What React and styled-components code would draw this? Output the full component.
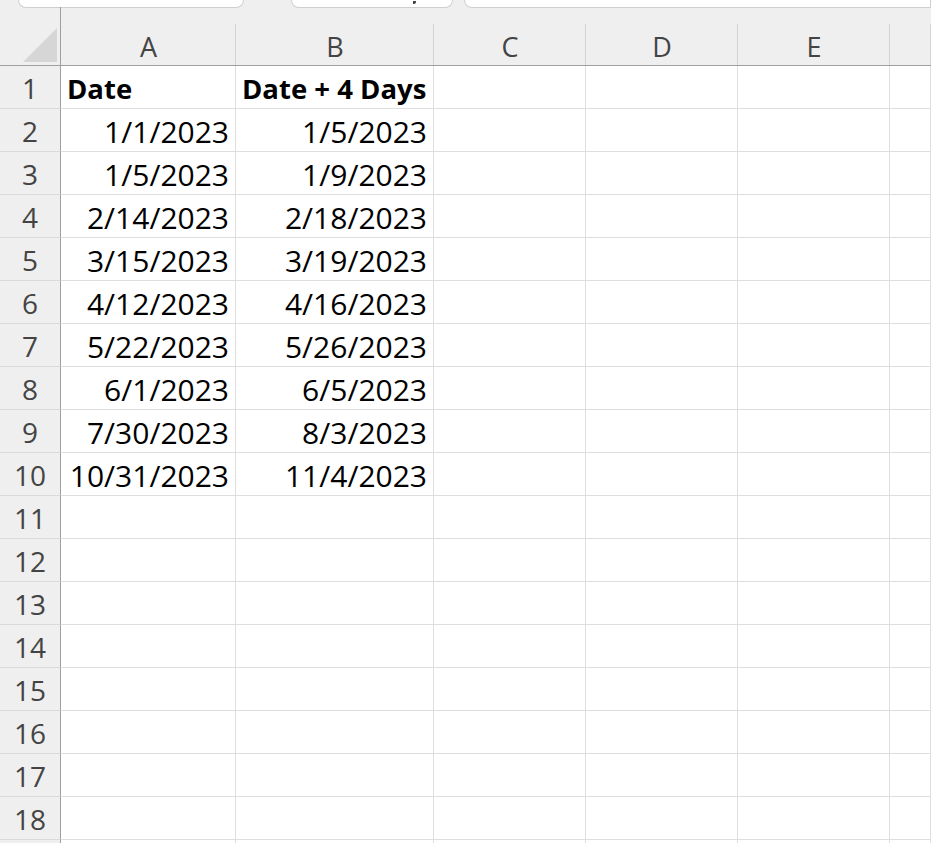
import React from 'react'
import styled, {createGlobalStyle} from 'styled-components'

const GlobalStyle = createGlobalStyle`
  html, body {
    margin: 0;
    padding: 0;
    background: #efefef;
    overflow: hidden;
  }
`

const Page = styled.div`
  width: 931px;
  height: 843px;
  overflow: hidden;
  background: #efefef;
`

const TopStrip = styled.div`
  display: flex;
  height: 7px;
  padding-left: 18px;
`

const TopBox = styled.div`
  box-sizing: border-box;
  height: 8px;
  width: ${p => p.$w};
  margin-right: ${p => p.$gap || '0px'};
  flex: ${p => p.$grow ? '1' : 'none'};
  background: #fff;
  border: 1px solid #cfcfcf;
  border-top: none;
  border-radius: ${p => p.$grow ? '0 0 0 8px' : '0 0 8px 8px'};
  display: flex;
  justify-content: flex-end;
  padding-right: 36px;
  overflow: hidden;
`

const Descender = styled.span`
  display: block;
  width: 3px;
  height: 3px;
  margin-top: 1px;
  background: #444;
  border-radius: 0 0 2px 0;
`

const Grid = styled.div`
  display: grid;
  grid-template-columns: 61px 175px 198px 152px 152px 152px 1fr;
  grid-template-rows: 59px repeat(19, 43px);
`

const Corner = styled.div`
  box-sizing: border-box;
  border-right: 1px solid #9f9f9f;
  border-bottom: 1px solid #9f9f9f;
  display: flex;
  justify-content: flex-end;
  align-items: flex-end;
  padding: 0 3px 3px 0;
`

const Triangle = styled.div`
  width: 34px;
  height: 34px;
  background: #d6d6d6;
  clip-path: polygon(100% 0, 100% 100%, 0 100%);
`

const ColHeader = styled.div`
  box-sizing: border-box;
  border-bottom: 1px solid #9f9f9f;
  background: linear-gradient(#d3d3d3, #d3d3d3) right bottom / 1px 41px no-repeat;
  display: flex;
  align-items: center;
  justify-content: center;
  padding-top: 20px;
  font-family: "Open Sans", "Noto Sans", sans-serif;
  font-size: 27px;
  color: #444;
`

const RowHeader = styled.div`
  box-sizing: border-box;
  border-right: 1px solid #9f9f9f;
  border-bottom: 1px solid #dadada;
  display: flex;
  align-items: center;
  justify-content: center;
  padding-top: 2px;
  font-family: "Open Sans", "Noto Sans", sans-serif;
  font-size: 28px;
  color: #444;
`

const Cell = styled.div`
  box-sizing: border-box;
  background: #fff;
  border-right: 1px solid #dedede;
  border-bottom: 1px solid #dedede;
  display: flex;
  align-items: center;
  justify-content: ${p => p.$right ? 'flex-end' : 'flex-start'};
  padding: 3px 6px 0 6px;
  font-family: "Open Sans", "Noto Sans", sans-serif;
  font-size: ${p => p.$bold ? '27.5px' : '30px'};
  font-weight: ${p => p.$bold ? 700 : 400};
  color: #000;
  white-space: nowrap;
  overflow: hidden;
`

const columns = ['A', 'B', 'C', 'D', 'E', '']

const data = [
    ['1/1/2023', '1/5/2023'],
    ['1/5/2023', '1/9/2023'],
    ['2/14/2023', '2/18/2023'],
    ['3/15/2023', '3/19/2023'],
    ['4/12/2023', '4/16/2023'],
    ['5/22/2023', '5/26/2023'],
    ['6/1/2023', '6/5/2023'],
    ['7/30/2023', '8/3/2023'],
    ['10/31/2023', '11/4/2023'],
]

// 18 numbered rows, plus the sliver of the next row at the bottom edge
const VISIBLE_ROWS = 18

const App = () => {
    const rows = Array.from({length: VISIBLE_ROWS + 1}, (_, i) => i + 1)

    return (
        <Page>
            <GlobalStyle/>
            <TopStrip>
                <TopBox $w='226px' $gap='47px'/>
                <TopBox $w='162px' $gap='11px'><Descender/></TopBox>
                <TopBox $grow/>
            </TopStrip>
            <Grid>
                <Corner><Triangle/></Corner>
                {columns.map((c, i) => <ColHeader key={i}>{c}</ColHeader>)}

                {rows.map(r => {
                    const values = r === 1
                        ? ['Date', 'Date + 4 Days']
                        : data[r - 2] || ['', '']
                    return (
                        <React.Fragment key={r}>
                            <RowHeader>{r <= VISIBLE_ROWS ? r : ''}</RowHeader>
                            <Cell $bold={r === 1} $right={r !== 1}>{values[0]}</Cell>
                            <Cell $bold={r === 1} $right={r !== 1}>{values[1]}</Cell>
                            <Cell/>
                            <Cell/>
                            <Cell/>
                            <Cell/>
                        </React.Fragment>
                    )
                })}
            </Grid>
        </Page>
    )
}

export default App
